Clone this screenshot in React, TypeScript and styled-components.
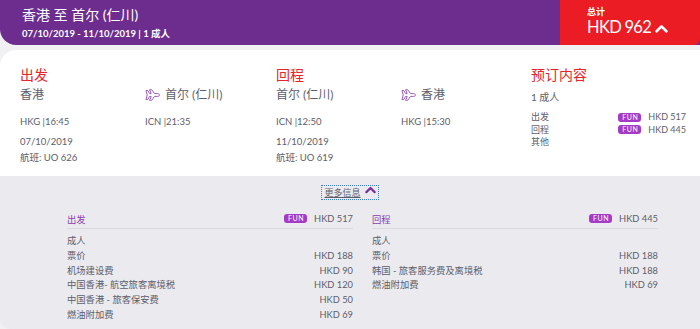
import styled, { createGlobalStyle } from 'styled-components';

const GlobalStyle = createGlobalStyle`
  html, body {
    margin: 0;
    padding: 0;
    background: #f1f1f3;
    font-family: 'Lato', 'Noto Sans CJK SC', sans-serif;
  }
`;

const Page = styled.div`
  width: 700px;
  height: 329px;
  overflow: hidden;
  display: flex;
  flex-direction: column;
`;

const Header = styled.div`
  display: flex;
  height: 45px;
  background: #6c2d8e;
  border-bottom-left-radius: 16px;
`;

const HeaderInfo = styled.div`
  flex: 1;
  padding: 6px 0 0 22px;
  color: #fff;
`;

const Title = styled.div`
  font-size: 14px;
  line-height: 18px;
`;

const SubTitle = styled.div`
  font-size: 9.5px;
  font-weight: 700;
  line-height: 14px;
  margin-top: 3px;
`;

const TotalBox = styled.div`
  width: 140px;
  background: #ec1c24;
  border-bottom-right-radius: 6px;
  color: #fff;
  display: flex;
  align-items: flex-end;
  justify-content: space-between;
  padding: 8px 32px 7px 27px;
  box-sizing: border-box;
`;

const TotalLabel = styled.div`
  font-size: 9px;
  line-height: 11px;
  font-weight: 700;
`;

const TotalValue = styled.div`
  font-size: 16.5px;
  letter-spacing: -0.7px;
  line-height: 21px;
  white-space: nowrap;
`;

const Chevron = styled.svg`
  display: block;
  flex-shrink: 0;
  margin-bottom: 5px;
`;

const Card = styled.div`
  margin-top: 5px;
  background: #fff;
  border-top-left-radius: 16px;
  display: grid;
  grid-template-columns: 256px 255px 1fr;
  padding: 15px 14px 0 20px;
  height: 126px;
  box-sizing: border-box;
`;

const Segment = styled.div`
  display: grid;
  grid-template-columns: 125px 1fr;
  align-content: start;
`;

const SectionTitle = styled.div`
  grid-column: 1 / -1;
  color: #e8232b;
  font-size: 14px;
  line-height: 20px;
`;

const Stop = styled.div`
  color: #5d5d6b;
`;

const City = styled.div`
  display: flex;
  align-items: center;
  gap: 5px;
  margin-top: 2px;
  font-size: 12px;
  line-height: 16px;
`;

const Time = styled.div`
  margin-top: 12px;
  font-size: 9.5px;
  line-height: 13px;
`;

const Extra = styled.div`
  margin-top: 6px;
  font-size: 9.5px;
  line-height: 16px;
`;

const Summary = styled.div`
  color: #5d5d6b;
`;

const SummaryLine = styled.div`
  margin-top: 5px;
  font-size: 10px;
  line-height: 14px;
`;

const SummaryList = styled.div`
  margin-top: 7px;
  display: flex;
  flex-direction: column;
`;

const SummaryRow = styled.div`
  display: flex;
  align-items: center;
  line-height: 12.5px;
  font-size: 9px;
`;

const SummaryLabel = styled.span`
  flex: 1;
`;

const Badge = styled.span`
  display: inline-block;
  background: #a43ac6;
  color: #fff;
  font-size: 7px;
  line-height: 9px;
  padding: 0 0 0 4px;
  width: 23px;
  box-sizing: border-box;
  border-radius: 3px;
  letter-spacing: 0.5px;
  margin-right: 7px;
`;

const Details = styled.div`
  flex: 1;
  background: #ebebef;
  border-bottom-left-radius: 10px;
  display: flex;
  flex-direction: column;
  align-items: center;
`;

const MoreLink = styled.a`
  margin-top: 10px;
  display: inline-flex;
  align-items: center;
  gap: 4px;
  padding: 0 2px;
  font-size: 9px;
  line-height: 13px;
  color: #5d5d6b;
  outline: 1px dotted #3b7bd0;
  text-decoration: underline;
  cursor: pointer;
`;

const Breakdown = styled.div`
  margin-top: 11px;
  align-self: stretch;
  display: grid;
  grid-template-columns: 286px 286px;
  column-gap: 19px;
  padding-left: 67px;
`;

const Block = styled.div`
  color: #5d5d6b;
  font-size: 9.3px;
`;

const BlockHead = styled.div`
  display: flex;
  align-items: center;
  height: 17px;
  border-bottom: 1px solid #d9d9df;
  padding-bottom: 1px;
  margin-bottom: 5px;
`;

const BlockTitle = styled.span`
  flex: 1;
  color: #8a3bad;
`;

const FeeRow = styled.div`
  display: flex;
  justify-content: space-between;
  line-height: 14.8px;
`;

const PlaneIcon = () => (
  <svg width="15" height="12" viewBox="0 0 15 12" fill="none" stroke="#9a5cbb" strokeWidth="1" strokeLinejoin="round">
    <path d="M1 1.5 L2.8 1.5 L4.6 4.6 L6.2 4.6 L4.6 0.7 L6.6 0.7 L9.6 4.6 L12.6 4.6 C13.8 4.6 14.4 5.2 14.4 6 C14.4 6.8 13.8 7.4 12.6 7.4 L9.6 7.4 L6.6 11.3 L4.6 11.3 L6.2 7.4 L4.6 7.4 L2.8 10.5 L1 10.5 L2.2 6 Z" />
  </svg>
);

const ChevronUp = ({ color, size }: { color: string; size: number }) => (
  <Chevron width={size} height={size * 0.7} viewBox="0 0 12 8">
    <path d="M1.5 6.5 L6 2 L10.5 6.5" fill="none" stroke={color} strokeWidth="2.4" strokeLinecap="round" strokeLinejoin="round" />
  </Chevron>
);

interface Leg {
  title: string;
  from: string;
  to: string;
  dep: string;
  arr: string;
  date: string;
  flight: string;
}

const legs: Leg[] = [
  { title: '出发', from: '香港', to: '首尔 (仁川)', dep: 'HKG |16:45', arr: 'ICN |21:35', date: '07/10/2019', flight: '航班: UO 626' },
  { title: '回程', from: '首尔 (仁川)', to: '香港', dep: 'ICN |12:50', arr: 'HKG |15:30', date: '11/10/2019', flight: '航班: UO 619' },
];

interface FeeBlock {
  title: string;
  total: string;
  fees: [string, string][];
}

const blocks: FeeBlock[] = [
  {
    title: '出发',
    total: 'HKD 517',
    fees: [
      ['成人', ''],
      ['票价', 'HKD 188'],
      ['机场建设费', 'HKD 90'],
      ['中国香港- 航空旅客离境税', 'HKD 120'],
      ['中国香港 - 旅客保安费', 'HKD 50'],
      ['燃油附加费', 'HKD 69'],
    ],
  },
  {
    title: '回程',
    total: 'HKD 445',
    fees: [
      ['成人', ''],
      ['票价', 'HKD 188'],
      ['韩国 - 旅客服务费及离境税', 'HKD 188'],
      ['燃油附加费', 'HKD 69'],
    ],
  },
];

export default function App() {
  return (
    <Page>
      <GlobalStyle />
      <Header>
        <HeaderInfo>
          <Title>香港 至 首尔 (仁川)</Title>
          <SubTitle>07/10/2019 - 11/10/2019 | 1 成人</SubTitle>
        </HeaderInfo>
        <TotalBox>
          <div>
            <TotalLabel>总计</TotalLabel>
            <TotalValue>HKD 962</TotalValue>
          </div>
          <ChevronUp color="#fff" size={13} />
        </TotalBox>
      </Header>

      <Card>
        {legs.map(leg => (
          <Segment key={leg.title}>
            <SectionTitle>{leg.title}</SectionTitle>
            <Stop>
              <City>{leg.from}</City>
              <Time>{leg.dep}</Time>
              <Extra>
                {leg.date}
                <br />
                {leg.flight}
              </Extra>
            </Stop>
            <Stop>
              <City>
                <PlaneIcon />
                {leg.to}
              </City>
              <Time>{leg.arr}</Time>
            </Stop>
          </Segment>
        ))}
        <Summary>
          <SectionTitle>预订内容</SectionTitle>
          <SummaryLine>1 成人</SummaryLine>
          <SummaryList>
            <SummaryRow>
              <SummaryLabel>出发</SummaryLabel>
              <Badge>FUN</Badge>HKD 517
            </SummaryRow>
            <SummaryRow>
              <SummaryLabel>回程</SummaryLabel>
              <Badge>FUN</Badge>HKD 445
            </SummaryRow>
            <SummaryRow>
              <SummaryLabel>其他</SummaryLabel>
            </SummaryRow>
          </SummaryList>
        </Summary>
      </Card>

      <Details>
        <MoreLink>
          更多信息
          <ChevronUp color="#7a2f9e" size={11} />
        </MoreLink>
        <Breakdown>
          {blocks.map(block => (
            <Block key={block.title}>
              <BlockHead>
                <BlockTitle>{block.title}</BlockTitle>
                <Badge>FUN</Badge>
                {block.total}
              </BlockHead>
              {block.fees.map(([label, amount]) => (
                <FeeRow key={label}>
                  <span>{label}</span>
                  <span>{amount}</span>
                </FeeRow>
              ))}
            </Block>
          ))}
        </Breakdown>
      </Details>
    </Page>
  );
}
